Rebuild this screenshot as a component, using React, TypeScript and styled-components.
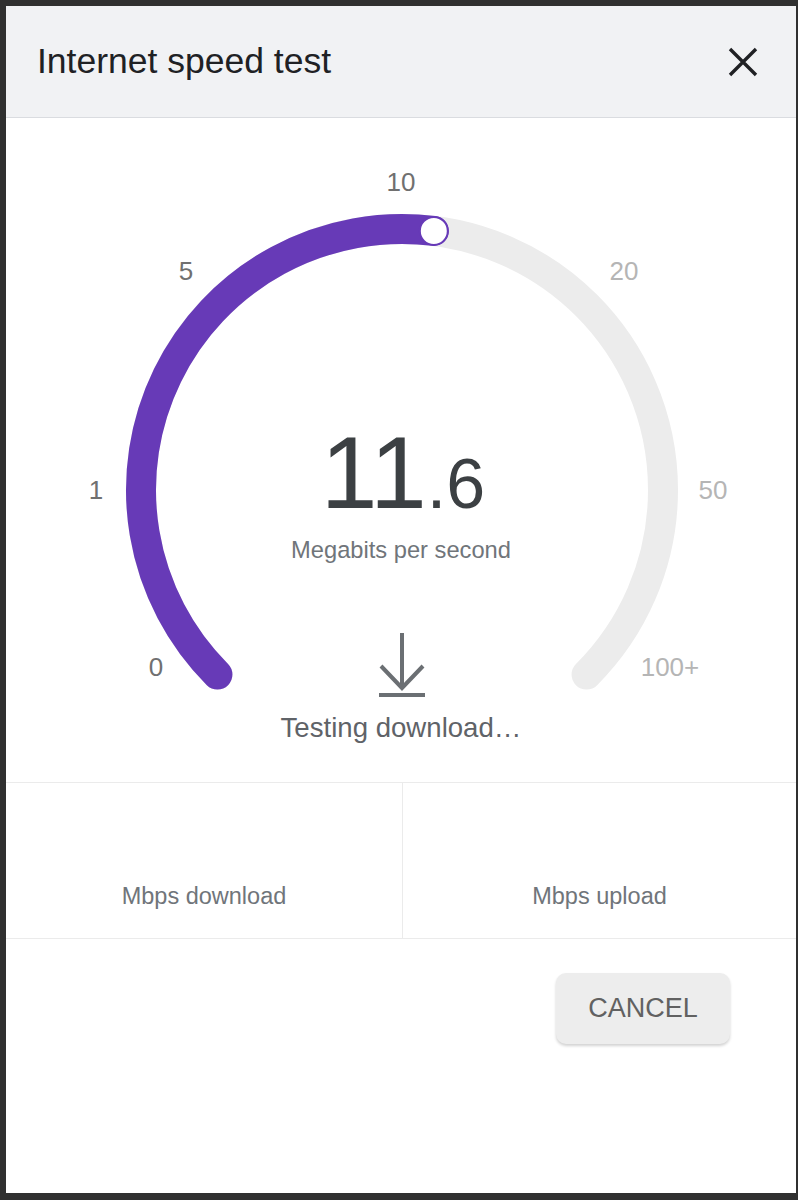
import React from "react";
import styled, { createGlobalStyle } from "styled-components";

const GlobalStyle = createGlobalStyle`
  html, body {
    margin: 0;
    padding: 0;
    background: #303030;
  }
  body {
    font-family: "Liberation Sans", Arial, Helvetica, sans-serif;
  }
`;

// gauge geometry, in the gauge section's own coordinates
const CX = 396;
const CY = 372;
const R = 261;
const START = -135;
const END = 135;
const VALUE_ANGLE = 7;

type Tick = { label: string; x: number; y: number; passed: boolean };

const ticks: Tick[] = [
  { label: "0", x: 150, y: 549, passed: true },
  { label: "1", x: 90, y: 372, passed: true },
  { label: "5", x: 180, y: 153, passed: true },
  { label: "10", x: 395, y: 64, passed: true },
  { label: "20", x: 618, y: 153, passed: false },
  { label: "50", x: 707, y: 372, passed: false },
  { label: "100+", x: 664, y: 549, passed: false },
];

function point(deg: number) {
  const rad = (deg * Math.PI) / 180;
  return { x: CX + R * Math.sin(rad), y: CY - R * Math.cos(rad) };
}

function arc(from: number, to: number) {
  const a = point(from);
  const b = point(to);
  const large = to - from > 180 ? 1 : 0;
  return `M ${a.x} ${a.y} A ${R} ${R} 0 ${large} 1 ${b.x} ${b.y}`;
}

const App: React.FC = () => {
  const knob = point(VALUE_ANGLE);
  return (
    <>
      <GlobalStyle />
      <Frame>
        <Dialog>
          <Header>
            <Title>Internet speed test</Title>
            <CloseButton aria-label="Close">
              <svg width="30" height="30" viewBox="0 0 30 30">
                <path d="M2 2 L28 28 M28 2 L2 28" stroke="#202124" strokeWidth="3.4" fill="none" />
              </svg>
            </CloseButton>
          </Header>

          <GaugeArea>
            <GaugeSvg viewBox="0 0 790 664">
              <path d={arc(START, END)} stroke="#ececec" strokeWidth="30" fill="none" strokeLinecap="round" />
              <path d={arc(START, VALUE_ANGLE)} stroke="#673ab7" strokeWidth="30" fill="none" strokeLinecap="round" />
              <circle cx={knob.x} cy={knob.y} r="14" fill="#fff" stroke="#673ab7" strokeWidth="2" />
              {ticks.map((t) => (
                <TickLabel key={t.label} x={t.x} y={t.y} $passed={t.passed} textAnchor="middle" dominantBaseline="central">
                  {t.label}
                </TickLabel>
              ))}
            </GaugeSvg>

            <Readout>
              <Speed>
                <Whole>11</Whole>
                <Fraction>.6</Fraction>
              </Speed>
              <Unit>Megabits per second</Unit>
              <DownloadIcon width="48" height="66" viewBox="0 0 48 66">
                <path d="M24 2 V57 M3 35 L24 57 L45 35" stroke="#6b6f73" strokeWidth="4" fill="none" />
                <path d="M1 64 H47" stroke="#6b6f73" strokeWidth="4" fill="none" />
              </DownloadIcon>
              <Status>Testing download…</Status>
            </Readout>
          </GaugeArea>

          <Stats>
            <StatCell>
              <StatLabel>Mbps download</StatLabel>
            </StatCell>
            <StatCell $divided>
              <StatLabel>Mbps upload</StatLabel>
            </StatCell>
          </Stats>

          <Footer>
            <CancelButton>CANCEL</CancelButton>
          </Footer>
        </Dialog>
      </Frame>
    </>
  );
};

const Frame = styled.div`
  box-sizing: border-box;
  min-height: 100vh;
  padding: 6px 2px 7px 6px;
  display: flex;
`;

const Dialog = styled.div`
  flex: 1;
  background: #fff;
  display: flex;
  flex-direction: column;
`;

const Header = styled.header`
  height: 111px;
  background: #f1f2f4;
  border-bottom: 1px solid #dadce0;
  display: flex;
  align-items: center;
  justify-content: space-between;
  padding: 0 38px 0 31px;
`;

const Title = styled.h1`
  margin: 0;
  font-size: 35.5px;
  font-weight: 400;
  color: #202124;
  line-height: 1;
`;

const CloseButton = styled.button`
  border: 0;
  background: none;
  padding: 0;
  width: 30px;
  height: 30px;
  display: flex;
  cursor: pointer;
`;

const GaugeArea = styled.section`
  height: 664px;
  display: grid;
  & > * {
    grid-area: 1 / 1;
  }
`;

const GaugeSvg = styled.svg`
  display: block;
  width: 790px;
  height: 664px;
`;

const TickLabel = styled.text<{ $passed: boolean }>`
  font-family: "Liberation Sans", Arial, sans-serif;
  font-size: 26px;
  fill: ${(p) => (p.$passed ? "#707070" : "#b5b5b5")};
`;

const Readout = styled.div`
  display: flex;
  flex-direction: column;
  align-items: center;
  padding-top: 304px;
`;

const Speed = styled.div`
  display: flex;
  align-items: baseline;
  margin-left: 4px;
  color: #3c4043;
  line-height: 1;
`;

const Whole = styled.span`
  font-size: 102px;
`;

const Fraction = styled.span`
  font-size: 70px;
`;

const Unit = styled.div`
  margin-top: 15px;
  font-size: 23.7px;
  line-height: 1;
  color: #70757a;
`;

const DownloadIcon = styled.svg`
  display: block;
  margin-top: 68px;
  margin-left: 2px;
`;

const Status = styled.div`
  margin-top: 17px;
  font-size: 27.6px;
  line-height: 1;
  color: #5f6368;
`;

const Stats = styled.div`
  display: grid;
  grid-template-columns: 396px 1fr;
  height: 155px;
  border-top: 1px solid #ebebeb;
  border-bottom: 1px solid #ebebeb;
`;

const StatCell = styled.div<{ $divided?: boolean }>`
  display: flex;
  flex-direction: column;
  justify-content: flex-end;
  align-items: center;
  padding-bottom: 28px;
  border-left: ${(p) => (p.$divided ? "1px solid #ebebeb" : "none")};
`;

const StatLabel = styled.div`
  font-size: 23.5px;
  line-height: 28px;
  color: #70757a;
`;

const Footer = styled.div`
  display: flex;
  justify-content: flex-end;
  padding: 34px 66px 0 0;
`;

const CancelButton = styled.button`
  width: 174px;
  height: 71px;
  border: 0;
  border-radius: 10px;
  background: #ededed;
  box-shadow: 0 2px 3px rgba(0, 0, 0, 0.18);
  font-family: "Liberation Sans", Arial, sans-serif;
  font-size: 27px;
  color: #616161;
  cursor: pointer;
`;

export default App;
